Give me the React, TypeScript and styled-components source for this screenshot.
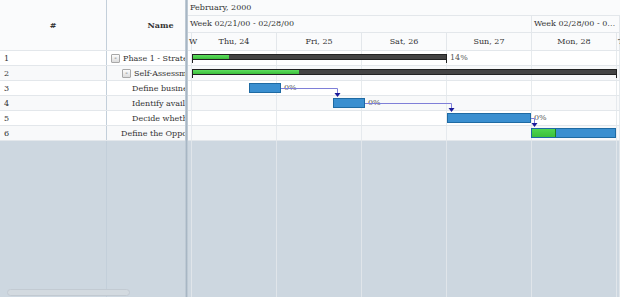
import React from "react";
import styled, { createGlobalStyle } from "styled-components";

const colors = {
  line: "#e3e7eb",
  headerBg: "#fafbfc",
  rowAlt: "#f8f9fa",
  empty: "#cdd7e0",
  splitter: "#a7b6c4",
  columnLine: "#c3cfda",
  text: "#333",
  blue: "#3a8fd0",
  blueBorder: "#1e6aa3",
  green: "#3cbf3c",
  greenBorder: "#1f7f1f",
  dark: "#444",
  link: "#7f7fd8",
  linkHead: "#1a1a9a",
};

const GlobalStyle = createGlobalStyle`
  body {
    margin: 0;
    background: #fff;
    font-family: "DejaVu Serif", "Liberation Serif", serif;
    color: ${colors.text};
  }
`;

interface Task {
  id: number;
  name: string;
  indent: number;
  expander?: boolean;
  kind: "summary" | "task";
  start: number;
  end: number;
  progress?: number;
  label?: string;
}

const tasks: Task[] = [
  { id: 1, name: "Phase 1 - Strategic Plan", indent: 4, expander: true, kind: "summary", start: 4, end: 259, progress: 36, label: "14%" },
  { id: 2, name: "Self-Assessment", indent: 15, expander: true, kind: "summary", start: 4, end: 429, progress: 106, label: "14%" },
  { id: 3, name: "Define business vision", indent: 25, kind: "task", start: 61, end: 93, label: "0%" },
  { id: 4, name: "Identify available skills, information and support", indent: 25, kind: "task", start: 145, end: 177, label: "0%" },
  { id: 5, name: "Decide whether to proceed", indent: 25, kind: "task", start: 259, end: 343, label: "0%" },
  { id: 6, name: "Define the Opportunity", indent: 14, kind: "task", start: 343, end: 428, progress: 23 },
];

const dayCells = [
  { label: "W", width: 4, left: true },
  { label: "Thu, 24", width: 85 },
  { label: "Fri, 25", width: 85 },
  { label: "Sat, 26", width: 85 },
  { label: "Sun, 27", width: 85 },
  { label: "Mon, 28", width: 85 },
  { label: "T", width: 3, left: true },
];

const weekCells = [
  { label: "Week 02/21/00 - 02/28/00", width: 344 },
  { label: "Week 02/28/00 - 03/06/00", width: 88 },
];

const ROW = 15;

// dependency paths, coordinates relative to chart body
const links = [
  { x1: 93, y: 37, x2: 149, y2: 47 },
  { x1: 177, y: 52, x2: 263, y2: 62 },
  { x1: 343, y: 67, x2: 346, y2: 77 },
];

const App: React.FC = () => {
  return (
    <>
      <GlobalStyle />
      <Gantt>
        <LeftPane>
          <GridHeader>
            <HeadCell bordered>#</HeadCell>
            <HeadCell>Name</HeadCell>
          </GridHeader>
          {tasks.map((t, i) => (
            <GridRow key={t.id} alt={i % 2 === 1}>
              <NumCell>{t.id}</NumCell>
              <NameCell style={{ paddingLeft: t.indent }}>
                {t.expander && <Expander>-</Expander>}
                <span>{t.name}</span>
              </NameCell>
            </GridRow>
          ))}
          <GridFiller>
            <FillerCell bordered />
            <FillerCell />
          </GridFiller>
          <ScrollThumb />
        </LeftPane>
        <Splitter />
        <ChartPane>
          <ChartHeader>
            <MonthRow>February, 2000</MonthRow>
            <ScaleRow>
              {weekCells.map((w) => (
                <WeekCell key={w.label} style={{ width: w.width }}>
                  {w.label}
                </WeekCell>
              ))}
            </ScaleRow>
            <ScaleRow>
              {dayCells.map((d) => (
                <DayCell key={d.label} left={d.left} style={{ width: d.width }}>
                  {d.label}
                </DayCell>
              ))}
            </ScaleRow>
          </ChartHeader>
          <ChartBody>
            {tasks.map((t, i) => (
              <ChartRow key={t.id} alt={i % 2 === 1}>
                {t.kind === "summary" ? (
                  <SummaryBar style={{ left: t.start, width: t.end - t.start }}>
                    <SummaryProgress style={{ width: t.progress }} />
                  </SummaryBar>
                ) : (
                  <TaskBar style={{ left: t.start, width: t.end - t.start }}>
                    {t.progress ? <TaskProgress style={{ width: t.progress }} /> : null}
                  </TaskBar>
                )}
                {t.label && <BarLabel style={{ left: t.end + 3 }}>{t.label}</BarLabel>}
              </ChartRow>
            ))}
            <ChartFiller />
            <GridLines>
              {dayCells.map((d) => (
                <GridLine key={d.label} style={{ width: d.width }} />
              ))}
            </GridLines>
            <Links width={432} height={6 * ROW}>
              {links.map((l, i) => (
                <g key={i}>
                  <path
                    d={`M${l.x1} ${l.y + 0.5} H${l.x2 + 0.5} V${l.y2 - 3}`}
                    fill="none"
                    stroke={colors.link}
                    strokeWidth={1}
                  />
                  <path
                    d={`M${l.x2 - 2.5} ${l.y2 - 5} L${l.x2 + 3.5} ${l.y2 - 5} L${l.x2 + 0.5} ${l.y2 - 1} Z`}
                    fill={colors.linkHead}
                  />
                </g>
              ))}
            </Links>
          </ChartBody>
        </ChartPane>
      </Gantt>
    </>
  );
};

const Gantt = styled.div`
  width: 620px;
  height: 297px;
  display: flex;
  overflow: hidden;
  font-size: 8px;
`;

const LeftPane = styled.div`
  position: relative;
  width: 185px;
  flex: none;
  display: flex;
  flex-direction: column;
  overflow: hidden;
`;

const GridHeader = styled.div`
  display: grid;
  grid-template-columns: 107px 107px;
  height: 51px;
  box-sizing: border-box;
  border-bottom: 1px solid ${colors.line};
  background: ${colors.headerBg};
`;

const HeadCell = styled.div<{ bordered?: boolean }>`
  display: flex;
  align-items: center;
  justify-content: center;
  font-weight: bold;
  ${(p) => p.bordered && `border-right: 1px solid ${colors.columnLine};`}
`;

const GridRow = styled.div<{ alt?: boolean }>`
  display: grid;
  grid-template-columns: 107px 107px;
  height: ${ROW}px;
  box-sizing: border-box;
  border-bottom: 1px solid ${colors.line};
  background: ${(p) => (p.alt ? colors.rowAlt : "#fff")};
`;

const NumCell = styled.div`
  display: flex;
  align-items: center;
  padding-left: 4px;
  border-right: 1px solid ${colors.columnLine};
`;

const NameCell = styled.div`
  display: flex;
  align-items: center;
  gap: 3px;
  white-space: nowrap;
  overflow: hidden;
`;

const Expander = styled.span`
  width: 9px;
  height: 9px;
  flex: none;
  box-sizing: border-box;
  border: 1px solid #a8a8a8;
  border-radius: 1px;
  background: linear-gradient(#fdfdfd, #dcdcdc);
  display: flex;
  align-items: center;
  justify-content: center;
  font-family: "DejaVu Sans", sans-serif;
  font-size: 7px;
  line-height: 1;
  color: #555;
`;

const GridFiller = styled.div`
  flex: 1;
  display: grid;
  grid-template-columns: 107px 107px;
  background: ${colors.empty};
`;

const FillerCell = styled.div<{ bordered?: boolean }>`
  ${(p) => p.bordered && `border-right: 1px solid ${colors.columnLine};`}
`;

const ScrollThumb = styled.div`
  position: absolute;
  left: 7px;
  bottom: 1px;
  width: 123px;
  height: 7px;
  box-sizing: border-box;
  border: 1px solid #c2cad2;
  border-radius: 4px;
  background: #d3dae0;
`;

const Splitter = styled.div`
  width: 3px;
  flex: none;
  background: linear-gradient(90deg, #c9d3dc, ${colors.splitter}, #c9d3dc);
`;

const ChartPane = styled.div`
  flex: 1;
  display: flex;
  flex-direction: column;
  overflow: hidden;
`;

const ChartHeader = styled.div`
  background: ${colors.headerBg};
  border-bottom: 1px solid ${colors.line};
`;

const MonthRow = styled.div`
  height: 16px;
  box-sizing: border-box;
  padding-left: 2px;
  display: flex;
  align-items: center;
  border-bottom: 1px solid ${colors.line};
`;

const ScaleRow = styled.div`
  display: flex;
  height: 17px;
  box-sizing: border-box;
  border-bottom: 1px solid ${colors.line};
  &:last-child {
    border-bottom: none;
  }
`;

const WeekCell = styled.div`
  flex: none;
  box-sizing: border-box;
  padding-left: 2px;
  display: flex;
  align-items: center;
  border-right: 1px solid ${colors.line};
  white-space: nowrap;
  overflow: hidden;
  text-overflow: ellipsis;
  min-width: 0;
  & {
    display: block;
    line-height: 16px;
  }
`;

const DayCell = styled.div<{ left?: boolean }>`
  flex: none;
  box-sizing: border-box;
  display: flex;
  align-items: center;
  justify-content: ${(p) => (p.left ? "flex-start" : "center")};
  border-right: 1px solid ${colors.line};
  white-space: nowrap;
  overflow: visible;
  padding-left: ${(p) => (p.left ? "1px" : "0")};
`;

const ChartBody = styled.div`
  position: relative;
  flex: 1;
  display: flex;
  flex-direction: column;
`;

const ChartRow = styled.div<{ alt?: boolean }>`
  position: relative;
  height: ${ROW}px;
  box-sizing: border-box;
  border-bottom: 1px solid ${colors.line};
  background: ${(p) => (p.alt ? colors.rowAlt : "#fff")};
`;

const ChartFiller = styled.div`
  flex: 1;
  background: ${colors.empty};
`;

const GridLines = styled.div`
  position: absolute;
  inset: 0;
  display: flex;
  pointer-events: none;
`;

const GridLine = styled.div`
  flex: none;
  height: 100%;
  box-sizing: border-box;
  border-right: 1px solid ${colors.line};
  opacity: 0.85;
`;

const SummaryBar = styled.div`
  position: absolute;
  top: 3px;
  height: 6px;
  box-sizing: border-box;
  background: ${colors.dark};
  border: 1px solid #222;
  z-index: 1;
  &::before,
  &::after {
    content: "";
    position: absolute;
    top: 4px;
    width: 1px;
    height: 4px;
    background: #222;
  }
  &::before {
    left: -1px;
  }
  &::after {
    right: -1px;
  }
`;

const SummaryProgress = styled.div`
  height: 100%;
  background: linear-gradient(#5ede5e, ${colors.green});
`;

const TaskBar = styled.div`
  position: absolute;
  top: 2px;
  height: 10px;
  box-sizing: border-box;
  background: ${colors.blue};
  border: 1px solid ${colors.blueBorder};
  z-index: 1;
  overflow: hidden;
`;

const TaskProgress = styled.div`
  height: 100%;
  background: linear-gradient(#4fd64f, ${colors.green});
  border-right: 1px solid ${colors.greenBorder};
`;

const BarLabel = styled.span`
  position: absolute;
  top: 0;
  line-height: 14px;
  white-space: nowrap;
  color: #555;
  z-index: 1;
`;

const Links = styled.svg`
  position: absolute;
  left: 0;
  top: 0;
  pointer-events: none;
  z-index: 2;
`;

export default App;
